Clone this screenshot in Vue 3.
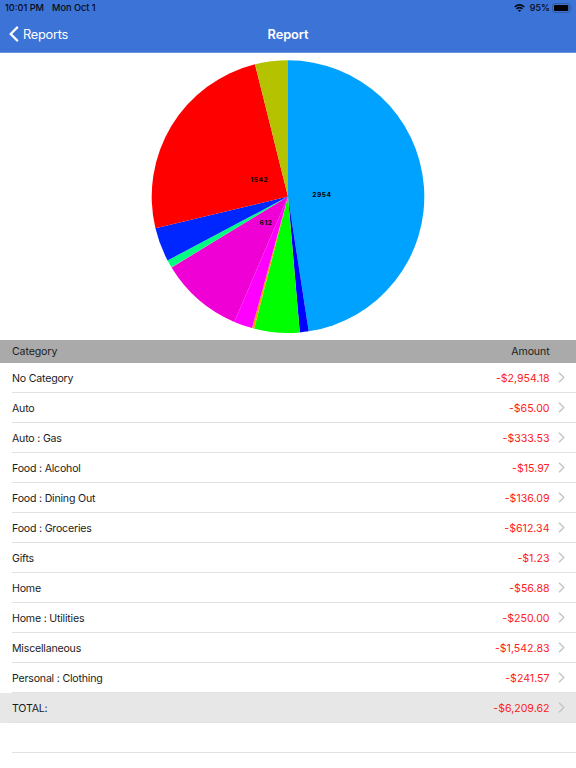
<template>
  <div class="report-page">
    <header class="top">
      <div class="status-bar">
        <span class="time">10:01 PM</span>
        <span class="date">Mon Oct 1</span>
        <div class="status-right">
          <svg class="wifi" width="11" height="8" viewBox="0 0 11 8" fill="none" stroke="#050a14">
            <path d="M0.7 3 Q5.5 -1.2 10.3 3" stroke-width="1.5" />
            <path d="M2.5 4.9 Q5.5 2.4 8.5 4.9" stroke-width="1.5" />
            <path d="M5.5 7.9 L3.9 6.3 Q5.5 5.1 7.1 6.3 Z" fill="#050a14" stroke="none" />
          </svg>
          <span class="percent">95%</span>
          <svg class="battery" width="21" height="10" viewBox="0 0 21 10">
            <rect x="0.5" y="0.5" width="17.6" height="9" rx="2.4" fill="none" stroke="#2d57a3" stroke-width="0.9" />
            <rect x="2" y="2" width="14.2" height="6" rx="0.8" fill="#000" />
            <path d="M19 3.2 Q20.4 5 19 6.8 Z" fill="#2d57a3" />
          </svg>
        </div>
      </div>
      <nav class="nav-bar">
        <a class="back">
          <svg width="10" height="16" viewBox="0 0 10 16" fill="none" stroke="#fff" stroke-width="2.2">
            <path d="M8.8 0.9 L1.7 8 L8.8 15.1" />
          </svg>
          <span>Reports</span>
        </a>
        <h1>Report</h1>
      </nav>
    </header>

    <div class="chart">
      <svg width="276" height="287" viewBox="150 53 276 287">
        <path v-for="s in slices" :key="s.name" :d="s.path" :fill="s.color" />
        <text v-for="l in labels" :key="l.text" :x="l.x" :y="l.y" class="slice-label">{{ l.text }}</text>
      </svg>
    </div>

    <div class="table-header">
      <span>Category</span>
      <span>Amount</span>
    </div>

    <ul class="rows">
      <li v-for="row in rows" :key="row.name" class="row" :class="{ total: row.total }">
        <div class="row-inner">
          <span class="name">{{ row.name }}</span>
          <span class="amount">{{ format(row.value) }}</span>
          <svg class="chevron" width="7" height="11" viewBox="0 0 7 11" fill="none" stroke="#c4c4c8" stroke-width="1.4">
            <path d="M1 0.8 L5.8 5.5 L1 10.2" />
          </svg>
        </div>
      </li>
      <li class="row">
        <div class="row-inner"></div>
      </li>
    </ul>
  </div>
</template>

<script setup>
const categories = [
  { name: 'No Category', value: 2954.18, color: '#00a2ff' },
  { name: 'Auto', value: 65, color: '#0000ff' },
  { name: 'Auto : Gas', value: 333.53, color: '#00ff00' },
  { name: 'Food : Alcohol', value: 15.97, color: '#ff9900' },
  { name: 'Food : Dining Out', value: 136.09, color: '#ff00ff' },
  { name: 'Food : Groceries', value: 612.34, color: '#ef00d4' },
  { name: 'Gifts', value: 1.23, color: '#b0a080' },
  { name: 'Home', value: 56.88, color: '#00ff80' },
  { name: 'Home : Utilities', value: 250, color: '#0026ff' },
  { name: 'Miscellaneous', value: 1542.83, color: '#ff0000' },
  { name: 'Personal : Clothing', value: 241.57, color: '#b5c200' }
]

const total = categories.reduce((sum, c) => sum + c.value, 0)
const rows = [...categories, { name: 'TOTAL:', value: total, total: true }]

const format = (value) =>
  '-$' + value.toLocaleString('en-US', { minimumFractionDigits: 2, maximumFractionDigits: 2 })

// pie starts at 12 o'clock and goes clockwise
const cx = 288
const cy = 196.6
const r = 136.3

const point = (angle) => `${cx + r * Math.sin(angle)} ${cy - r * Math.cos(angle)}`

let start = 0
const slices = categories.map((c) => {
  const end = start + (c.value / total) * Math.PI * 2
  const path = `M${cx} ${cy} L${point(start)} A${r} ${r} 0 0 1 ${point(end)} Z`
  start = end
  return { name: c.name, color: c.color, path }
})

const labels = [
  { text: '2954', x: 321.8, y: 196.8 },
  { text: '1542', x: 259.3, y: 181.8 },
  { text: '612', x: 266, y: 224.8 }
]
</script>

<style>
body {
  background: #fff;
}
</style>

<style scoped>
.report-page {
  width: 576px;
  height: 768px;
  overflow: hidden;
  background: #fff;
  color: #1c1c1c;
  font-family: Inter, "Liberation Sans", sans-serif;
}

.top {
  height: 53px;
  box-sizing: border-box;
  background: #3c73d7;
  border-bottom: 1px solid #6c94dc;
}

.status-bar {
  display: flex;
  align-items: center;
  height: 16px;
  padding: 0 3px 0 5px;
  font-size: 9.2px;
  font-weight: 500;
  line-height: 16px;
  color: #050a14;
}

.date {
  margin-left: 8px;
}

.status-right {
  display: flex;
  align-items: center;
  margin-left: auto;
}

.percent {
  margin: 0 2px 0 5px;
  font-size: 9px;
}

.nav-bar {
  display: grid;
  grid-template-columns: 1fr auto 1fr;
  align-items: center;
  height: 36px;
  padding: 0 9px;
  color: #fff;
}

.back {
  display: flex;
  align-items: center;
  gap: 4px;
  font-size: 12.8px;
  letter-spacing: -0.25px;
}

h1 {
  margin: 0;
  font-size: 12.8px;
  font-weight: 600;
  letter-spacing: -0.1px;
}

.chart {
  display: flex;
  justify-content: center;
  height: 287px;
}

.slice-label {
  font-size: 6.6px;
  font-weight: 700;
  text-anchor: middle;
  letter-spacing: 0.5px;
  fill: #000;
}

.table-header {
  display: flex;
  justify-content: space-between;
  box-sizing: border-box;
  height: 23px;
  padding: 1px 26.5px 0 12px;
  background: #aaa;
  font-size: 10.6px;
  letter-spacing: -0.12px;
  line-height: 22px;
}

.rows {
  margin: 0;
  padding: 0;
  list-style: none;
}

.row {
  height: 30px;
  padding-left: 12px;
}

.row-inner {
  display: flex;
  align-items: center;
  box-sizing: border-box;
  height: 30px;
  padding-right: 11px;
  border-bottom: 1px solid #e2e2e4;
  font-size: 10.6px;
}

.name {
  padding-top: 1px;
  letter-spacing: -0.2px;
}

.amount {
  margin-left: auto;
  padding-top: 1px;
  color: #ff2020;
}

.chevron {
  margin-left: 8.5px;
}

.total {
  background: #e7e7e7;
}
</style>
